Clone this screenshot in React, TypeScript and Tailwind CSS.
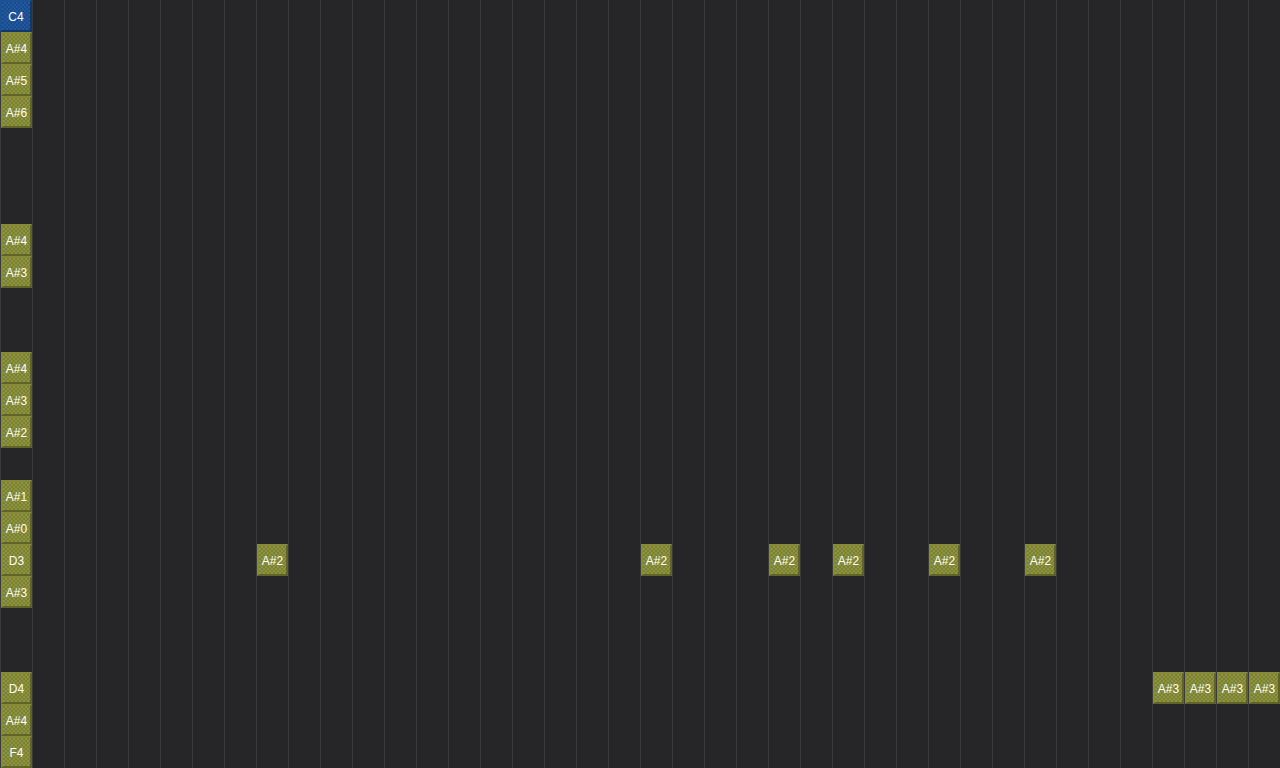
import React from "react";

const COLS = 40;
const ROWS = 24;

type Note = { label: string; blue?: boolean };
const notes: Record<string, Note> = {
  "0,0": { label: "C4", blue: true },
  "1,0": { label: "A#4" },
  "2,0": { label: "A#5" },
  "3,0": { label: "A#6" },
  "7,0": { label: "A#4" },
  "8,0": { label: "A#3" },
  "11,0": { label: "A#4" },
  "12,0": { label: "A#3" },
  "13,0": { label: "A#2" },
  "15,0": { label: "A#1" },
  "16,0": { label: "A#0" },
  "17,0": { label: "D3" },
  "18,0": { label: "A#3" },
  "21,0": { label: "D4" },
  "22,0": { label: "A#4" },
  "23,0": { label: "F4" },
  "17,8": { label: "A#2" },
  "17,20": { label: "A#2" },
  "17,24": { label: "A#2" },
  "17,26": { label: "A#2" },
  "17,29": { label: "A#2" },
  "17,32": { label: "A#2" },
  "21,36": { label: "A#3" },
  "21,37": { label: "A#3" },
  "21,38": { label: "A#3" },
  "21,39": { label: "A#3" },
};

function NoteCell({ n }: { n: Note }) {
  return n.blue ? (
    <div className="w-full h-full border-2 border-t-[#1c5294] border-l-[#1c5294] border-b-[#12386a] border-r-[#12386a] bg-[repeating-conic-gradient(#2059a0_0_25%,#1a4c8c_0_50%)] bg-[length:4px_4px] flex items-center justify-center pt-px text-white text-[12px] leading-none font-['Liberation_Sans',Arial,sans-serif]">
      {n.label}
    </div>
  ) : (
    <div className="w-full h-full border-2 border-t-[#858b38] border-l-[#858b38] border-b-[#5e6328] border-r-[#5e6328] bg-[repeating-conic-gradient(#8d933e_0_25%,#7b8133_0_50%)] bg-[length:4px_4px] flex items-center justify-center pt-px text-white text-[12px] leading-none font-['Liberation_Sans',Arial,sans-serif]">
      {n.label}
    </div>
  );
}

export default function App() {
  const cells = [];
  for (let r = 0; r < ROWS; r++) {
    for (let c = 0; c < COLS; c++) {
      const n = notes[`${r},${c}`];
      cells.push(
        <div key={`${r}-${c}`} className="w-8 h-8 border-l border-[#3b3b3d] first:border-l-0">
          {n ? <NoteCell n={n} /> : null}
        </div>
      );
    }
  }
  return (
    <div className="w-[1280px] h-[768px] bg-[#262628] overflow-hidden">
      <div className="grid grid-cols-[repeat(40,32px)] grid-rows-[repeat(24,32px)]">{cells}</div>
    </div>
  );
}
